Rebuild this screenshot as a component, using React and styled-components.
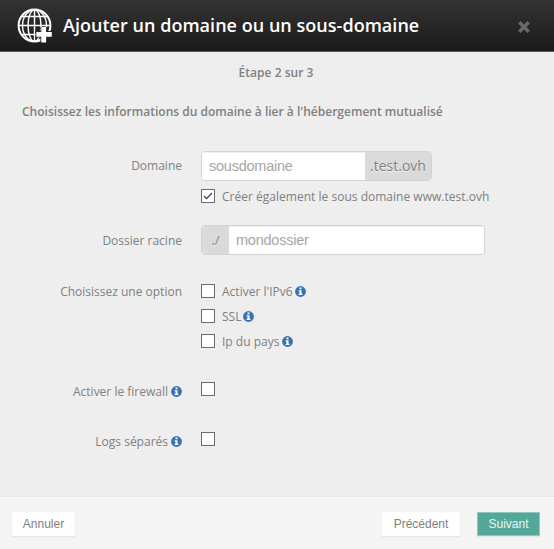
import React from 'react';
import styled, { createGlobalStyle } from 'styled-components';

const GlobalStyle = createGlobalStyle`
  *, *::before, *::after { box-sizing: border-box; }
  body { margin: 0; background: #eee; overflow: hidden; }
`;

const Dialog = styled.div`
  width: 554px;
  height: 549px;
  display: flex;
  flex-direction: column;
  background: #eee;
  color: #808080;
  font: 12px/18px "Open Sans", sans-serif;
`;

const Header = styled.header`
  height: 52px;
  flex: none;
  display: flex;
  align-items: center;
  padding: 0 24px 1px 17px;
  background: linear-gradient(#333, #1b1b1b);
  border-bottom: 1px solid #555;
`;

const Title = styled.h1`
  flex: 1;
  margin: 0 0 0 11px;
  color: #fff;
  font-size: 18px;
  line-height: 24px;
  font-weight: 600;
  white-space: nowrap;
  letter-spacing: 0.03px;
`;

const CloseButton = styled.button`
  display: flex;
  padding: 3px 0 0;
  border: 0;
  background: none;
`;

const Body = styled.main`
  flex: 1;
  display: flex;
  flex-direction: column;
  border-bottom: 1px solid #e6e6e6;
`;

const Step = styled.p`
  margin: 12px 2px 0 0;
  text-align: center;
  font-weight: 600;
  letter-spacing: 0.04px;
`;

const Intro = styled.p`
  margin: 21px 0 0 22px;
  font-weight: 600;
  letter-spacing: 0.01px;
  white-space: nowrap;
`;

const Row = styled.div`
  display: grid;
  grid-template-columns: 182px 1fr;
  column-gap: 19px;
  height: ${(p) => p.$height}px;
  margin-top: ${(p) => p.$gap || 0}px;
`;

const Label = styled.div`
  display: flex;
  justify-content: flex-end;
  align-items: center;
  gap: 3px;
  height: 18px;
  margin-top: ${(p) => p.$top || 0}px;
  white-space: nowrap;
`;

const Field = styled.div`
  display: flex;
  flex-direction: column;
  align-items: flex-start;
`;

const InputGroup = styled.div`
  display: flex;
  width: ${(p) => p.$width}px;
  height: 30px;
  border: 1px solid #d3d3d3;
  border-radius: 4px;
  background: #fff;
  overflow: hidden;
`;

const Input = styled.input`
  flex: 1;
  min-width: 0;
  padding: 0 7px 1px;
  border: 0;
  outline: 0;
  background: #fff;
  box-shadow: inset 0 1px 1px rgba(0, 0, 0, 0.07);
  font: 14.5px "Liberation Sans", sans-serif;
  letter-spacing: -0.24px;
  &::placeholder { color: #a6a6a6; opacity: 1; }
`;

const Addon = styled.span`
  width: ${(p) => p.$width}px;
  display: flex;
  align-items: center;
  justify-content: center;
  background: #dadada;
  font-size: ${(p) => p.$size}px;
  text-shadow: 0 1px 0 #f4f4f4;
`;

const Choice = styled.label`
  display: flex;
  align-items: flex-start;
  gap: 7px;
  height: 18px;
  margin-top: ${(p) => p.$gap || 0}px;
  white-space: nowrap;
`;

const ChoiceText = styled.span`
  display: flex;
  align-items: center;
  gap: 2px;
  padding-top: 1px;
  letter-spacing: 0.015px;
`;

const Box = styled.span`
  display: flex;
  width: 14px;
  height: 14px;
  margin-top: 2px;
  border: 1px solid #686868;
  background: #fff;
`;

const Footer = styled.footer`
  flex: none;
  height: 52px;
  display: flex;
  align-items: flex-start;
  padding: 14px 14px 0 12px;
  background: #f4f4f4;
  border-top: 1px solid #f9f9f9;
`;

const Button = styled.button`
  width: ${(p) => p.$width}px;
  height: 24px;
  padding: 0;
  margin-left: ${(p) => (p.$push ? 'auto' : p.$gap ? `${p.$gap}px` : 0)};
  border: 1px solid ${(p) => (p.$primary ? '#8fc8bc' : '#fcfcfc')};
  background: ${(p) => (p.$primary ? '#54a899' : '#fff')};
  color: ${(p) => (p.$primary ? '#e8f4f2' : '#808080')};
  box-shadow: 0 1px 1px rgba(0, 0, 0, 0.05);
  font: 12px "Liberation Sans", sans-serif;
`;

const InfoMark = styled.svg`
  flex: none;
  width: 11px;
  height: 11px;
  margin-bottom: 2px;
`;

const GlobeIcon = () => (
  <svg width="35" height="36" viewBox="0 0 35 36" fill="none" stroke="#fff" strokeWidth="1.4">
    <circle cx="17.5" cy="18.5" r="15.9" strokeWidth="2" />
    <ellipse cx="17.5" cy="18.5" rx="6.5" ry="15.8" />
    <ellipse cx="17.5" cy="18.5" rx="12" ry="15.8" />
    <path d="M17.5 2.5v32M1.5 18.5h32M5 9.5h25M5 27.5h25" />
    <path d="M26.7 20v15M18.5 27.3h16" stroke="#262626" strokeWidth="6.6" />
    <path d="M26.7 20v15.5M19.3 27.3h15.5" strokeWidth="4.8" />
  </svg>
);

const CloseIcon = () => (
  <svg width="12" height="12" viewBox="0 0 12 12" stroke="#6a6a6a" strokeWidth="3.4">
    <path d="M1.3 1.3l9.4 9.4M10.7 1.3l-9.4 9.4" />
  </svg>
);

const InfoIcon = () => (
  <InfoMark viewBox="0 0 11 11">
    <circle cx="5.5" cy="5.5" r="5.4" fill="#3972b3" />
    <path d="M4.5 1.6h2v1.7h-2zM3.7 4.2h2.8v3.6h.9v1.3H3.6V7.8h.9V5.5h-.8z" fill="#fff" />
  </InfoMark>
);

const CheckIcon = () => (
  <svg width="12" height="12" viewBox="0 0 12 12" fill="none" stroke="#444" strokeWidth="1.3">
    <path d="M2 6l2.6 2.6 5.4-5.6" />
  </svg>
);

const Option = ({ text, info, checked, gap }) => (
  <Choice $gap={gap}>
    <Box>{checked && <CheckIcon />}</Box>
    {text && (
      <ChoiceText>
        <span>{text}</span>
        {info && <InfoIcon />}
      </ChoiceText>
    )}
  </Choice>
);

export default function App() {
  return (
    <Dialog>
      <GlobalStyle />
      <Header>
        <GlobeIcon />
        <Title>Ajouter un domaine ou un sous-domaine</Title>
        <CloseButton aria-label="Fermer"><CloseIcon /></CloseButton>
      </Header>
      <Body>
        <Step>Étape 2 sur 3</Step>
        <Intro>Choisissez les informations du domaine à lier à l'hébergement mutualisé</Intro>
        <Row $gap={30} $height={74}>
          <Label $top={6}>Domaine</Label>
          <Field>
            <InputGroup $width={231}>
              <Input placeholder="sousdomaine" />
              <Addon $width={66} $size={14}>.test.ovh</Addon>
            </InputGroup>
            <Option gap={6} checked text="Créer également le sous domaine www.test.ovh" />
          </Field>
        </Row>
        <Row $height={57}>
          <Label $top={7}>Dossier racine</Label>
          <Field>
            <InputGroup $width={284}>
              <Addon $width={27} $size={13}>./</Addon>
              <Input placeholder="mondossier" />
            </InputGroup>
          </Field>
        </Row>
        <Row $height={98}>
          <Label $top={1}>Choisissez une option</Label>
          <Field>
            <Option text="Activer l'IPv6" info />
            <Option gap={7} text="SSL" info />
            <Option gap={7} text="Ip du pays" info />
          </Field>
        </Row>
        <Row $height={50}>
          <Label $top={3}>Activer le firewall <InfoIcon /></Label>
          <Field><Option /></Field>
        </Row>
        <Row $height={30}>
          <Label $top={3}>Logs séparés <InfoIcon /></Label>
          <Field><Option /></Field>
        </Row>
      </Body>
      <Footer>
        <Button $width={63}>Annuler</Button>
        <Button $width={78} $push>Précédent</Button>
        <Button $width={63} $gap={17} $primary>Suivant</Button>
      </Footer>
    </Dialog>
  );
}
